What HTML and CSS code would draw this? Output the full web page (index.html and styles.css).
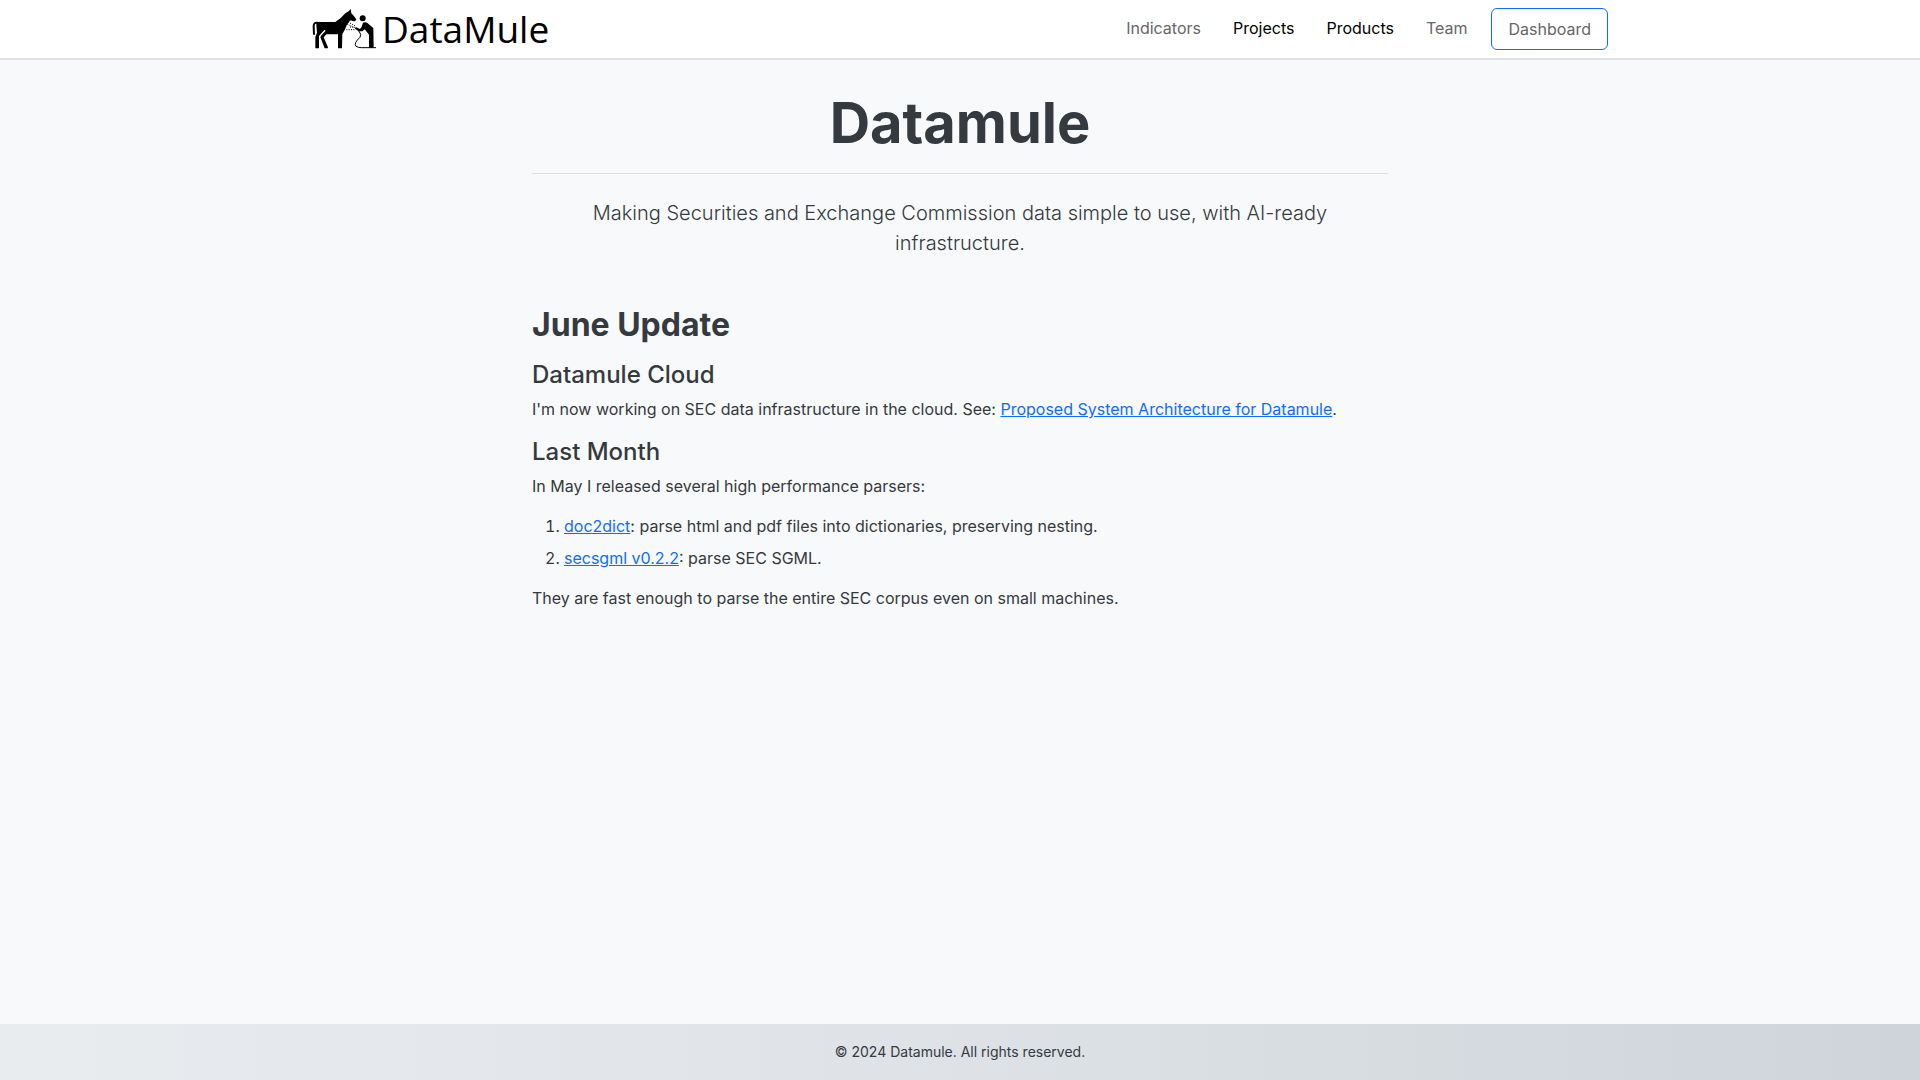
FILE: index.html
```html
<!DOCTYPE html>
<html lang="en">

<head>
    <meta charset="UTF-8">
    <meta name="viewport" content="width=device-width, initial-scale=1.0">
    <title>Datamule</title>
    <link rel="stylesheet" href="styles.css">
</head>

<body>

    <header class="navbar">
        <div class="container navbar-inner">
            <a class="navbar-brand" href="#">
                <svg class="brand-icon" viewBox="36 24 198 126" aria-hidden="true">
                    <!-- mule -->
                    <path d="M50 66 L106 66 L122 54 L136 40 L146 34 L152 27 L154 40 L161 47 L169 58 L166 63 L160 64 L152 61 L147 65 L140 76 L134 90 L127 102 L126 145 L114 145 L114 103 L79 103 L71 112 L84 142 L83 145 L74 145 L61 112 L63 107 L77 92 L73 90 L57 108 L57 145 L46 145 L46 110 L51 98 L49 74 Z" />
                    <path class="tail" d="M54 69 Q41 66 41 78 L42 104" />
                    <!-- man with the hose -->
                    <circle cx="188" cy="55" r="9" />
                    <path d="M189 68 Q197 64 203 70 L220 84 L221 143 L207 143 L207 104 L194 88 L187 94 L176 94 L165 86 L167 81 L180 87 L185 80 Z" />
                    <path class="hose" d="M176 92 Q186 104 180 112 Q160 130 168 139 Q174 143 184 143 L228 143" />
                    <path class="spray" d="M144 66 L168 79 M142 73 L166 83 M150 81 L164 83 M139 89 L166 89" />
                </svg>
                <span class="brand-text">DataMule</span>
            </a>
            <nav>
                <ul class="nav-list">
                    <li><a class="nav-link" href="#">Indicators</a></li>
                    <li><a class="nav-link active" href="#">Projects</a></li>
                    <li><a class="nav-link active" href="#">Products</a></li>
                    <li><a class="nav-link" href="#">Team</a></li>
                    <li><a class="nav-link nav-button" href="#">Dashboard</a></li>
                </ul>
            </nav>
        </div>
    </header>

    <main class="content">
        <h1>Datamule</h1>
        <p class="lead">Making Securities and Exchange Commission data simple to use, with AI-ready infrastructure.</p>

        <h2>June Update</h2>
        <h3>Datamule Cloud</h3>
        <p>I'm now working on SEC data infrastructure in the cloud. See: <a href="#">Proposed System Architecture for Datamule</a>.</p>
        <h3>Last Month</h3>
        <p>In May I released several high performance parsers:</p>
        <ol>
            <li><a href="#">doc2dict</a>: parse html and pdf files into dictionaries, preserving nesting.</li>
            <li><a href="#">secsgml v0.2.2</a>: parse SEC SGML.</li>
        </ol>
        <p>They are fast enough to parse the entire SEC corpus even on small machines.</p>
    </main>

    <footer class="footer">
        <p>© 2024 Datamule. All rights reserved.</p>
    </footer>

</body>

</html>
```

FILE: styles.css
```css
* {
    margin: 0;
    padding: 0;
    box-sizing: border-box;
}

body {
    display: flex;
    flex-direction: column;
    min-height: 100vh;
    background-color: #f8f9fa;
    color: #343a40;
    font-family: Inter, sans-serif;
    font-size: 16px;
    line-height: 24px;
}

a {
    color: #0d6efd;
}

.container {
    width: 100%;
    max-width: 1320px;
    margin: 0 auto;
    padding: 0 12px;
}

/* Navbar */

.navbar {
    padding: 8px 0;
    background-color: #fff;
    border-bottom: 2px solid #dee2e6;
}

.navbar-inner {
    display: flex;
    justify-content: space-between;
    align-items: center;
}

.navbar-brand {
    display: flex;
    align-items: center;
    gap: 4px;
    height: 42px;
    color: #000;
    text-decoration: none;
}

.brand-icon {
    width: 66px;
    height: 42px;
}

.tail {
    fill: none;
    stroke: #000;
    stroke-width: 6;
}

.hose {
    fill: none;
    stroke: #000;
    stroke-width: 3;
}

.spray {
    fill: none;
    stroke: #000;
    stroke-width: 3;
    stroke-dasharray: 3 4;
}

.brand-text {
    font-family: "Open Sans", sans-serif;
    font-size: 37px;
    line-height: 42px;
}

.nav-list {
    display: flex;
    list-style: none;
}

.nav-link {
    display: block;
    padding: 8px 16px;
    color: #666;
    text-decoration: none;
}

.nav-link.active {
    color: #000;
}

.nav-button {
    margin-left: 8px;
    border: 1px solid #0d6efd;
    border-radius: 6px;
}

/* Page content */

.content {
    flex: 1;
    width: 100%;
    max-width: 880px;
    margin: 0 auto;
    padding: 29px 12px 48px;
}

h1 {
    padding-bottom: 16px;
    margin-bottom: 24px;
    border-bottom: 1px solid #dee2e6;
    font-size: 56px;
    font-weight: 700;
    line-height: 68px;
    text-align: center;
}

h2 {
    margin-bottom: 16px;
    font-size: 32px;
    font-weight: 700;
    line-height: 38px;
}

h3 {
    margin-bottom: 8px;
    font-size: 24px;
    font-weight: 500;
    line-height: 29px;
}

.content p,
.content ol {
    margin-bottom: 16px;
}

.content .lead {
    margin-bottom: 48px;
    padding: 0 48px;
    font-size: 20px;
    font-weight: 300;
    line-height: 30px;
    text-align: center;
}

.content ol {
    padding-left: 32px;
}

.content li + li {
    margin-top: 8px;
}

/* Footer */

.footer {
    padding: 16px;
    background: linear-gradient(90deg, #e9ecef, #dee2e6, #ced4da);
    font-size: 14px;
    text-align: center;
}
```
